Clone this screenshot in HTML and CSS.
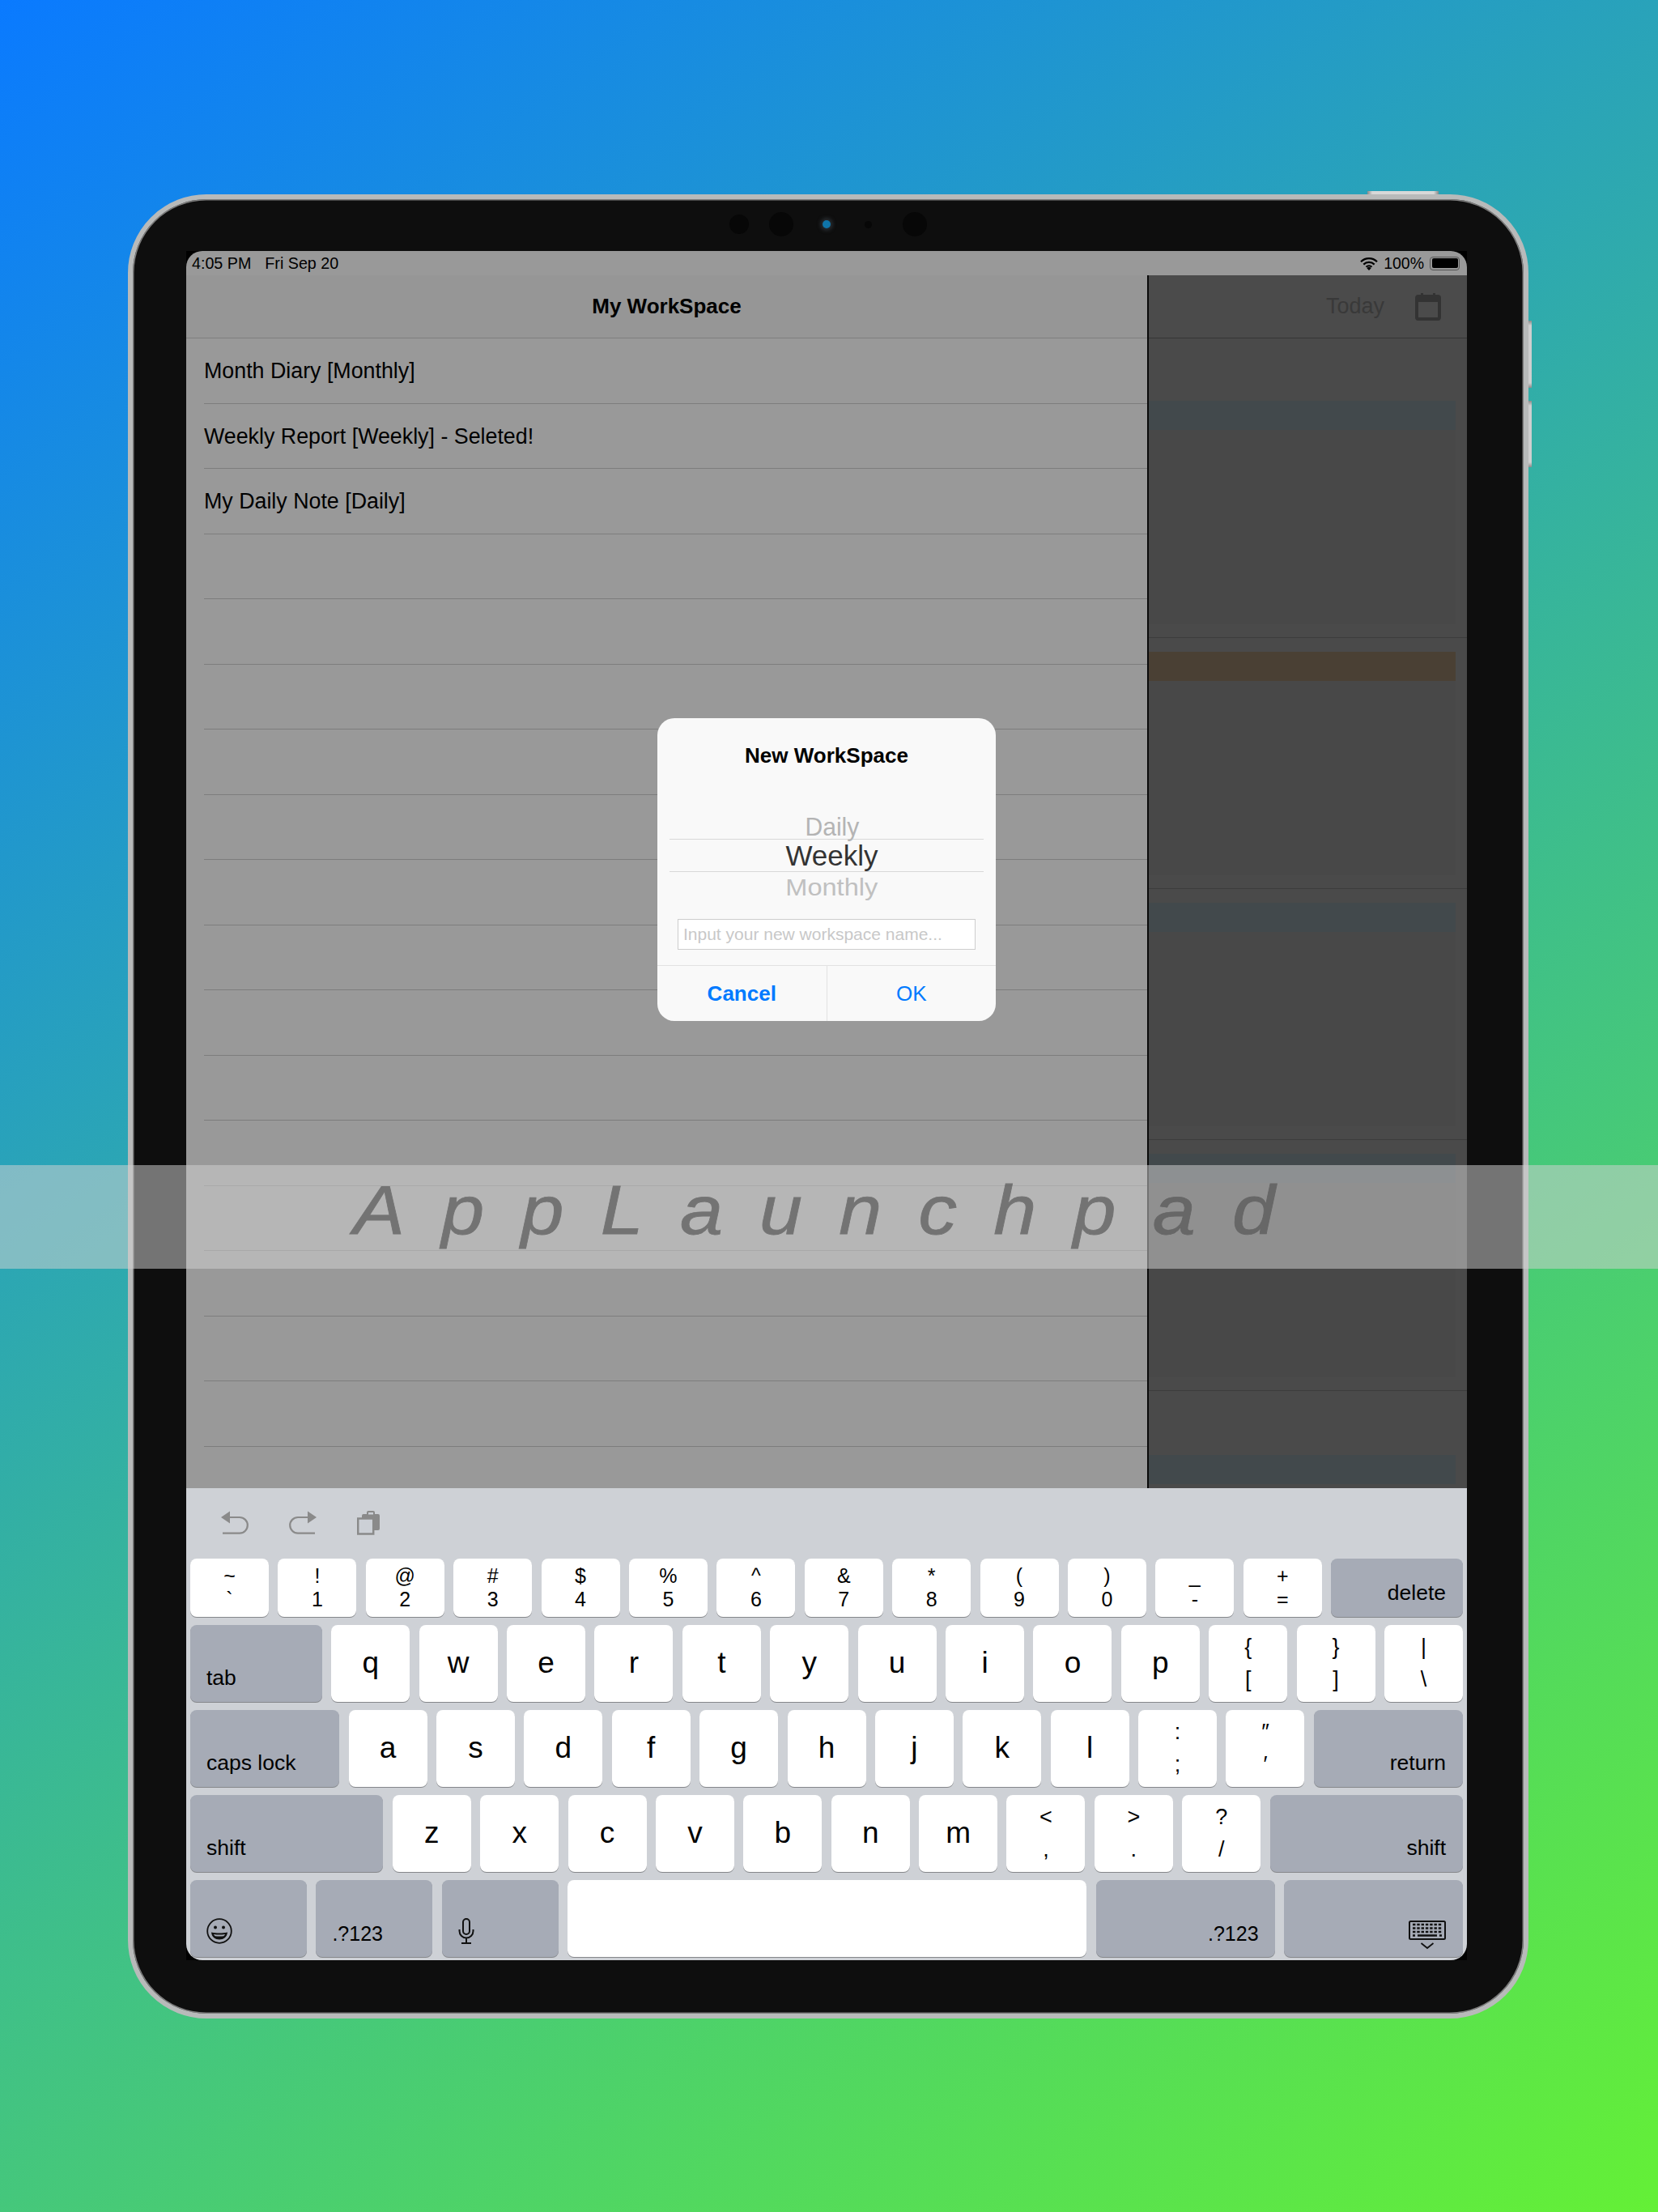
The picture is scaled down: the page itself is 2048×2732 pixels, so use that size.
FILE: index.html
```html
<!DOCTYPE html>
<html lang="en">
<head>
  <meta charset="UTF-8">
  <title>AppLaunchpad</title>
  <link rel="stylesheet" href="styles.css">
</head>
<body>
  <div class="device">
    <span class="btn-top"></span>
    <span class="btn-vol btn-up"></span>
    <span class="btn-vol btn-down"></span>

    <div class="sensors">
      <span class="lens lens-a"></span>
      <span class="lens lens-b"></span>
      <span class="lens lens-c"></span>
      <span class="lens lens-d"></span>
      <span class="lens lens-e"></span>
    </div>

    <div class="screen">
      <div class="display">
        <div class="app">
          <div class="split">
            <section class="master">
              <div class="status-left"><span>4:05 PM</span><span>Fri Sep 20</span></div>
              <header class="nav"><h1>My WorkSpace</h1></header>
              <ul class="rows">
                <li>Month Diary [Monthly]</li>
                <li>Weekly Report [Weekly] - Seleted!</li>
                <li>My Daily Note [Daily]</li>
                <li></li><li></li><li></li><li></li><li></li><li></li>
                <li></li><li></li><li></li><li></li><li></li><li></li><li></li><li></li>
              </ul>
            </section>

            <section class="detail">
              <div class="status-right">
                <svg class="wifi" width="22" height="17" viewBox="0 0 22 17">
                  <path d="M1 6.2a14.2 14.2 0 0 1 20 0M4.3 9.6a9.6 9.6 0 0 1 13.4 0M7.5 12.8a5 5 0 0 1 7 0" fill="none" stroke="#000" stroke-width="2.2"/>
                  <path d="M11 17l-2.6-2.8a3.6 3.6 0 0 1 5.2 0z" fill="#000"/>
                </svg>
                <span>100%</span>
                <span class="battery"><i></i></span>
              </div>
              <header class="nav nav-dark">
                <span class="today">Today</span>
                <svg width="32" height="34" viewBox="0 0 32 34">
                  <path d="M7 0h3v5H7zM22 0h3v5h-3z" fill="#333"/>
                  <rect x="2" y="4" width="28" height="28" rx="2" fill="none" stroke="#333" stroke-width="4"/>
                  <rect x="2" y="4" width="28" height="7" fill="#333"/>
                </svg>
              </header>
              <div class="day day-first"><div class="band band-blue"></div><div class="fill"></div></div>
              <div class="day"><div class="band band-orange"></div><div class="fill"></div></div>
              <div class="day"><div class="band band-blue"></div><div class="fill"></div></div>
              <div class="day"><div class="band band-blue"></div><div class="fill"></div></div>
              <div class="day day-last"><div class="band band-blue"></div></div>
            </section>
          </div>

          <div class="dialog">
            <h2>New WorkSpace</h2>
            <div class="picker">
              <div class="pick pick-up"><span>Daily</span></div>
              <div class="pick pick-on"><span>Weekly</span></div>
              <div class="pick pick-down"><span>Monthly</span></div>
            </div>
            <div class="field">Input your new workspace name...</div>
            <div class="actions">
              <div class="action action-bold">Cancel</div>
              <div class="action">OK</div>
            </div>
          </div>
        </div>

        <div class="keyboard">
          <div class="toolbar">
            <svg class="tool" width="34" height="30" viewBox="0 0 34 30">
              <path d="M0 8l11-7.500v15z" fill="#8a8a8a"/>
              <path d="M9 8h14a9.800 9.800 0 0 1 0 19.600H2" fill="none" stroke="#8a8a8a" stroke-width="2.200"/>
            </svg>
            <svg class="tool" width="34" height="30" viewBox="0 0 34 30">
              <path d="M34 8l-11-7.500v15z" fill="#8a8a8a"/>
              <path d="M25 8H11a9.800 9.800 0 0 0 0 19.600h21" fill="none" stroke="#8a8a8a" stroke-width="2.200"/>
            </svg>
            <svg class="tool" width="28" height="30" viewBox="0 0 28 30">
              <path d="M6 6a2 2 0 0 1 2-2h4V2a2 2 0 0 1 2-2h6a2 2 0 0 1 2 2v2h4a2 2 0 0 1 2 2v16a2 2 0 0 1-2 2H6z" fill="#8a8a8a"/>
              <rect x="14" y="2" width="6" height="2.500" fill="#ccd0d6"/>
              <rect x="1.200" y="9.500" width="19" height="19" fill="#ccd0d6" stroke="#8a8a8a" stroke-width="2.500"/>
            </svg>
          </div>

          <div class="kb-row row-num">
            <div class="key key-two"><span>~</span><span>`</span></div>
            <div class="key key-two"><span>!</span><span>1</span></div>
            <div class="key key-two"><span>@</span><span>2</span></div>
            <div class="key key-two"><span>#</span><span>3</span></div>
            <div class="key key-two"><span>$</span><span>4</span></div>
            <div class="key key-two"><span>%</span><span>5</span></div>
            <div class="key key-two"><span>^</span><span>6</span></div>
            <div class="key key-two"><span>&amp;</span><span>7</span></div>
            <div class="key key-two"><span>*</span><span>8</span></div>
            <div class="key key-two"><span>(</span><span>9</span></div>
            <div class="key key-two"><span>)</span><span>0</span></div>
            <div class="key key-two"><span>_</span><span>-</span></div>
            <div class="key key-two"><span>+</span><span>=</span></div>
            <div class="fn fn-right">delete</div>
          </div>

          <div class="kb-row">
            <div class="fn">tab</div>
            <div class="key">q</div>
            <div class="key">w</div>
            <div class="key">e</div>
            <div class="key">r</div>
            <div class="key">t</div>
            <div class="key">y</div>
            <div class="key">u</div>
            <div class="key">i</div>
            <div class="key">o</div>
            <div class="key">p</div>
            <div class="key key-two"><span>{</span><span>[</span></div>
            <div class="key key-two"><span>}</span><span>]</span></div>
            <div class="key key-two"><span>|</span><span>\</span></div>
          </div>

          <div class="kb-row">
            <div class="fn">caps lock</div>
            <div class="key">a</div>
            <div class="key">s</div>
            <div class="key">d</div>
            <div class="key">f</div>
            <div class="key">g</div>
            <div class="key">h</div>
            <div class="key">j</div>
            <div class="key">k</div>
            <div class="key">l</div>
            <div class="key key-two"><span>:</span><span>;</span></div>
            <div class="key key-two"><span>″</span><span>′</span></div>
            <div class="fn fn-right">return</div>
          </div>

          <div class="kb-row">
            <div class="fn">shift</div>
            <div class="key">z</div>
            <div class="key">x</div>
            <div class="key">c</div>
            <div class="key">v</div>
            <div class="key">b</div>
            <div class="key">n</div>
            <div class="key">m</div>
            <div class="key key-two"><span>&lt;</span><span>,</span></div>
            <div class="key key-two"><span>&gt;</span><span>.</span></div>
            <div class="key key-two"><span>?</span><span>/</span></div>
            <div class="fn fn-right">shift</div>
          </div>

          <div class="kb-row">
            <div class="fn fn-small">
              <svg width="32" height="32" viewBox="0 0 32 32">
                <circle cx="16" cy="16" r="14.800" fill="none" stroke="#111" stroke-width="1.800"/>
                <circle cx="11" cy="11.500" r="2" fill="#111"/>
                <circle cx="21" cy="11.500" r="2" fill="#111"/>
                <path d="M6 17.500c6 1.300 14 1.300 20 0-.5 6-5 9-10 9s-9.500-3-10-9z" fill="#111"/>
                <path d="M9 20c4.500.8 9.500.8 14 0-.5 1.200-1 1.700-1.800 2.200-3.500.5-7 .5-10.400 0-.8-.5-1.300-1-1.800-2.200z" fill="#a6abb6"/>
              </svg>
            </div>
            <div class="fn fn-small fn-num">.?123</div>
            <div class="fn fn-small">
              <svg width="20" height="32" viewBox="0 0 20 32">
                <rect x="6" y="1" width="8" height="19" rx="4" fill="none" stroke="#111" stroke-width="2"/>
                <path d="M1.500 14v2a8.500 8.500 0 0 0 17 0v-2M10 25v5M4 31h12" fill="none" stroke="#111" stroke-width="2"/>
              </svg>
            </div>
            <div class="key key-space"></div>
            <div class="fn fn-wide fn-right fn-num">.?123</div>
            <div class="fn fn-wide fn-right fn-icon">
              <svg width="46" height="36" viewBox="0 0 46 36">
                <rect x="1" y="1" width="44" height="22" rx="1.500" fill="none" stroke="#111" stroke-width="2"/>
                <path d="M5 5h36M5 9.500h36M5 14h36" fill="none" stroke="#111" stroke-width="2.600" stroke-dasharray="3.400 1.900"/>
                <path d="M5 18.500h3M11 18.500h24M38 18.500h3" fill="none" stroke="#111" stroke-width="2.600"/>
                <path d="M15.500 28l7.500 6 7.500-6" fill="none" stroke="#111" stroke-width="1.800"/>
              </svg>
            </div>
          </div>
        </div>
      </div>
    </div>
  </div>

  <div class="banner"><span>AppLaunchpad</span></div>
</body>
</html>
```

FILE: styles.css
```css
* {
  box-sizing: border-box;
}
html, body {
  margin: 0;
  padding: 0;
}
body {
  position: relative;
  width: 2048px;
  height: 2732px;
  overflow: hidden;
  padding: 240px 0 0 158px;
  font-family: "Liberation Sans", Arial, sans-serif;
  color: #000;
  background: linear-gradient(145deg, #0a7aff 0%, #64f036 100%);
}

/* device frame */
.device {
  position: relative;
  width: 1730px;
  height: 2253px;
  border: 6px solid #b8baba;
  border-radius: 97px;
  background: #0e0e0e;
  box-shadow: inset 0 0 0 1.5px #7c7c7c;
}
.btn-top {
  position: absolute;
  top: -10px;
  left: 1525px;
  width: 88px;
  height: 4px;
  background: linear-gradient(90deg, #8a8a8a 0, #d8d8d8 6px, #d8d8d8 82px, #8a8a8a 88px);
}
.btn-vol {
  position: absolute;
  left: 1724px;
  width: 4px;
  background: linear-gradient(180deg, #8a8a8a 0, #cfcfcf 6px, #cfcfcf calc(100% - 6px), #8a8a8a 100%);
}
.btn-up {
  top: 150px;
  height: 83px;
}
.btn-down {
  top: 249px;
  height: 82px;
}
.sensors {
  display: flex;
  align-items: center;
  height: 62px;
  margin-bottom: 2px;
  padding-left: 737px;
}
.lens {
  display: block;
  border-radius: 50%;
  background: #070707;
}
.lens-a { width: 24px; height: 24px; }
.lens-b { width: 30px; height: 30px; margin-left: 25px; }
.lens-c {
  width: 10px;
  height: 10px;
  margin-left: 36px;
  background: #0f74a8;
  box-shadow: 0 0 4px 3px #262a2e;
}
.lens-d { width: 9px; height: 9px; margin-left: 42px; }
.lens-e { width: 30px; height: 30px; margin-left: 38px; }

.screen {
  width: 1582px;
  height: 2111px;
  margin-left: 66px;
  background: #000;
}
.display {
  display: flex;
  flex-direction: column;
  height: 100%;
  border-radius: 20px;
  overflow: hidden;
}

/* app behind the dim */
.app {
  position: relative;
  height: 1528px;
  overflow: hidden;
}
.split {
  display: flex;
  height: 100%;
}
.master {
  width: 1187px;
  background: #999;
}
.status-left {
  display: flex;
  gap: 17px;
  align-items: center;
  height: 30px;
  padding-left: 7px;
  font-size: 19.7px;
}
.nav {
  display: flex;
  align-items: center;
  justify-content: center;
  height: 78px;
  background: #969696;
  border-bottom: 1px solid #7e7e7e;
}
.nav h1 {
  margin: 0;
  font-size: 26px;
  font-weight: 700;
}
.rows {
  list-style: none;
  margin: 0;
  padding: 0 0 0 22px;
}
.rows li {
  display: flex;
  align-items: center;
  height: 80.5px;
  padding-top: 2px;
  font-size: 26.8px;
  border-bottom: 1px solid #7d7d7d;
}

.detail {
  display: flex;
  flex-direction: column;
  flex: 1;
  background: #4a4a4a;
  border-left: 2px solid #0a0a0a;
  margin-top: 30px;
  position: relative;
}
.status-right {
  position: absolute;
  top: -30px;
  left: -2px;
  right: 0;
  display: flex;
  align-items: center;
  justify-content: flex-end;
  height: 30px;
  padding-right: 9px;
  font-size: 19.5px;
  background: #999;
}
.wifi {
  margin-right: 7px;
}
.battery {
  position: relative;
  display: block;
  width: 37px;
  height: 17px;
  margin-left: 7px;
  padding: 1.5px;
  border: 1px solid #555;
  border-radius: 4px;
}
.battery i {
  display: block;
  height: 100%;
  background: #000;
  border-radius: 2px;
}
.nav-dark {
  justify-content: flex-end;
  padding-right: 32px;
  height: 78px;
  background: #4b4b4b;
  border-bottom: 1px solid #363636;
}
.today {
  margin-right: 38px;
  font-size: 27px;
  color: #393939;
}
.day {
  display: flex;
  flex-direction: column;
  height: 310px;
  padding: 17px 14px 0 0;
  border-bottom: 1px solid #3c3c3c;
}
.day-first {
  height: 370px;
  padding-top: 77px;
}
.day-last {
  height: 120px;
  padding-top: 79px;
  border-bottom: 0;
}
.band {
  height: 36px;
  flex: none;
}
.band-blue { background: #42494c; }
.band-orange { background: #4a4034; }
.fill {
  height: 240px;
  background: #484848;
}

/* alert */
.dialog {
  position: absolute;
  top: 577px;
  left: 582px;
  width: 418px;
  height: 374px;
  background: #f9f9f9;
  border-radius: 21px;
  overflow: hidden;
}
.dialog h2 {
  margin: 0;
  padding-top: 31px;
  height: 110px;
  font-size: 26px;
  line-height: 30px;
  font-weight: 700;
  text-align: center;
}
.picker {
  height: 138px;
  margin: 0 15px;
  overflow: hidden;
}
.pick {
  display: flex;
  justify-content: center;
  align-items: center;
  height: 41px;
  padding-left: 13px;
  font-size: 35px;
  line-height: 41px;
}
.pick span {
  display: block;
}
.pick-up {
  height: 39px;
  color: #b4b4b4;
}
.pick-up span {
  transform: scale(0.86, 0.88) translateY(2px);
  transform-origin: center bottom;
}
.pick-on {
  color: #333;
  border-top: 1px solid #d8d8d8;
  border-bottom: 1px solid #d8d8d8;
}
.pick-down {
  height: 34px;
  color: #c0c0c0;
}
.pick-down span {
  transform: scale(0.93, 0.86) translateY(4px);
  transform-origin: center top;
}
.field {
  height: 38px;
  margin: 0 25px 19px;
  padding-left: 6px;
  font-size: 21px;
  line-height: 35px;
  color: #c8c8c8;
  background: #fff;
  border: 1.5px solid #cdcdcd;
}
.actions {
  display: flex;
  height: 69px;
  border-top: 1px solid #e2e2e2;
  color: #007aff;
  font-size: 26px;
}
.action {
  display: flex;
  flex: 1;
  align-items: center;
  justify-content: center;
}
.action-bold {
  font-weight: 700;
  border-right: 1px solid #e2e2e2;
}

/* keyboard */
.keyboard {
  flex: 1;
  display: flex;
  flex-direction: column;
  gap: 10.5px;
  padding: 0 5px;
  background: #ced1d6;
}
.toolbar {
  display: flex;
  height: 76.5px;
  padding: 28px 0 0 38px;
}
.tool {
  margin-right: 50px;
}
.kb-row {
  display: flex;
  gap: 11.4px;
  height: 94.5px;
}
.row-num {
  height: 71.5px;
}
.key, .fn {
  border-radius: 8px;
  box-shadow: 0 1px 0 #85878b;
}
.key {
  display: flex;
  flex: 0 0 97px;
  align-items: center;
  justify-content: center;
  font-size: 37px;
  background: #fff;
}
.key-two {
  flex-direction: column;
  font-size: 27px;
  line-height: 40px;
}
.row-num .key-two {
  font-size: 25px;
  line-height: 29px;
}
.key-space {
  flex: 0 0 641px;
}
.fn {
  display: flex;
  flex: 1;
  align-items: flex-end;
  padding: 0 21px 16px 20px;
  font-size: 26.5px;
  line-height: 1;
  background: #a6abb6;
}
.fn-right {
  justify-content: flex-end;
}
.fn-small {
  flex: 0 0 144px;
}
.fn-wide {
  flex: 0 0 221px;
}
.fn-num {
  font-size: 25px;
  padding-right: 20px;
}
.fn-icon {
  padding-bottom: 9px;
}

/* promo strip */
.banner {
  position: absolute;
  top: 1439px;
  left: 0;
  display: flex;
  align-items: center;
  justify-content: center;
  width: 2048px;
  height: 128px;
  padding: 0 0 16px 8px;
  background: rgba(210, 210, 210, 0.525);
}
.banner span {
  font-size: 85px;
  font-style: italic;
  letter-spacing: 40.4px;
  color: #525252;
  -webkit-text-stroke: 0.8px #525252;
  opacity: 0.66;
  transform: scaleX(1.12);
}
```
